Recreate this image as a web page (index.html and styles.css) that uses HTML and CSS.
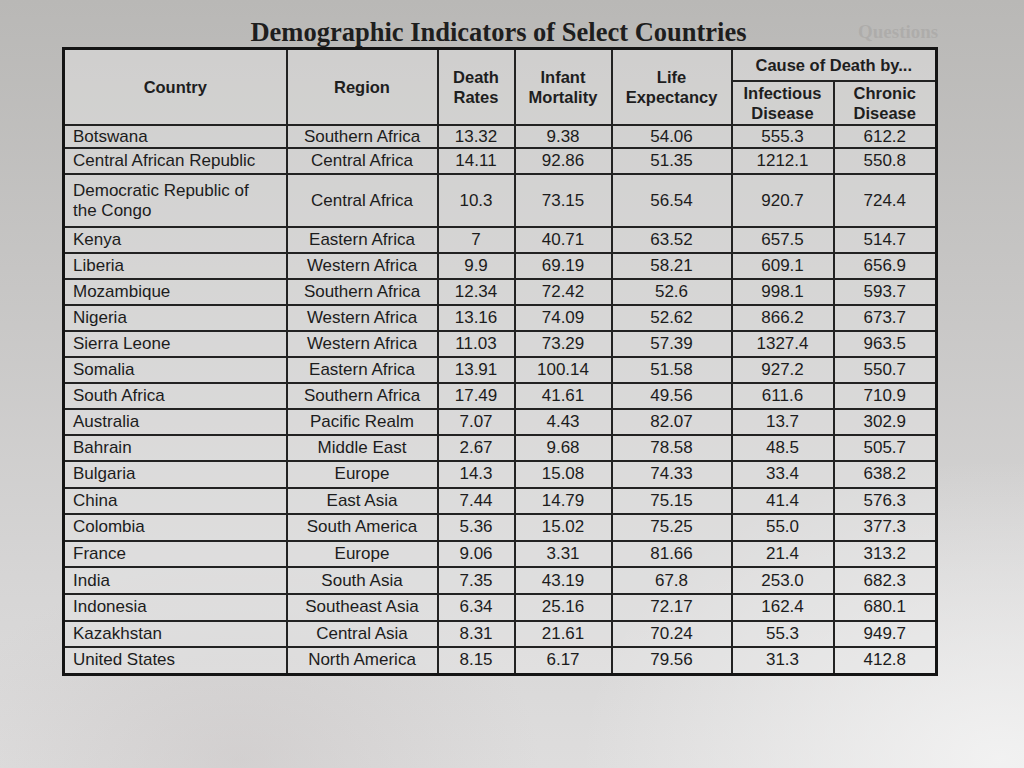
FILE: index.html
```html
<!DOCTYPE html>
<html lang="en">
<head>
<meta charset="utf-8">
<title>Demographic Indicators of Select Countries</title>
<link rel="stylesheet" href="styles.css">
</head>
<body>
<div class="page">
  <div class="ghost">Questions</div>
  <div class="sheet">
    <h1 class="title">Demographic Indicators of Select Countries</h1>
    <table class="data">
      <colgroup>
        <col class="c-country"><col class="c-region"><col class="c-death"><col class="c-infant"><col class="c-life"><col class="c-inf"><col class="c-chr">
      </colgroup>
      <thead>
        <tr class="h1row">
          <th rowspan="2">Country</th>
          <th rowspan="2">Region</th>
          <th rowspan="2">Death<br>Rates</th>
          <th rowspan="2">Infant<br>Mortality</th>
          <th rowspan="2">Life<br>Expectancy</th>
          <th colspan="2" class="cause">Cause of Death by...</th>
        </tr>
        <tr class="h2row">
          <th>Infectious<br>Disease</th>
          <th>Chronic<br>Disease</th>
        </tr>
      </thead>
      <tbody>
        <tr class="r-first"><td>Botswana</td><td>Southern Africa</td><td>13.32</td><td>9.38</td><td>54.06</td><td>555.3</td><td>612.2</td></tr>
        <tr><td>Central African Republic</td><td>Central Africa</td><td>14.11</td><td>92.86</td><td>51.35</td><td>1212.1</td><td>550.8</td></tr>
        <tr class="r-tall"><td>Democratic Republic of<br>the Congo</td><td>Central Africa</td><td>10.3</td><td>73.15</td><td>56.54</td><td>920.7</td><td>724.4</td></tr>
        <tr><td>Kenya</td><td>Eastern Africa</td><td>7</td><td>40.71</td><td>63.52</td><td>657.5</td><td>514.7</td></tr>
        <tr><td>Liberia</td><td>Western Africa</td><td>9.9</td><td>69.19</td><td>58.21</td><td>609.1</td><td>656.9</td></tr>
        <tr><td>Mozambique</td><td>Southern Africa</td><td>12.34</td><td>72.42</td><td>52.6</td><td>998.1</td><td>593.7</td></tr>
        <tr><td>Nigeria</td><td>Western Africa</td><td>13.16</td><td>74.09</td><td>52.62</td><td>866.2</td><td>673.7</td></tr>
        <tr><td>Sierra Leone</td><td>Western Africa</td><td>11.03</td><td>73.29</td><td>57.39</td><td>1327.4</td><td>963.5</td></tr>
        <tr><td>Somalia</td><td>Eastern Africa</td><td>13.91</td><td>100.14</td><td>51.58</td><td>927.2</td><td>550.7</td></tr>
        <tr><td>South Africa</td><td>Southern Africa</td><td>17.49</td><td>41.61</td><td>49.56</td><td>611.6</td><td>710.9</td></tr>
        <tr><td>Australia</td><td>Pacific Realm</td><td>7.07</td><td>4.43</td><td>82.07</td><td>13.7</td><td>302.9</td></tr>
        <tr><td>Bahrain</td><td>Middle East</td><td>2.67</td><td>9.68</td><td>78.58</td><td>48.5</td><td>505.7</td></tr>
        <tr class="r-low"><td>Bulgaria</td><td>Europe</td><td>14.3</td><td>15.08</td><td>74.33</td><td>33.4</td><td>638.2</td></tr>
        <tr class="r-low"><td>China</td><td>East Asia</td><td>7.44</td><td>14.79</td><td>75.15</td><td>41.4</td><td>576.3</td></tr>
        <tr class="r-low"><td>Colombia</td><td>South America</td><td>5.36</td><td>15.02</td><td>75.25</td><td>55.0</td><td>377.3</td></tr>
        <tr class="r-low"><td>France</td><td>Europe</td><td>9.06</td><td>3.31</td><td>81.66</td><td>21.4</td><td>313.2</td></tr>
        <tr class="r-low"><td>India</td><td>South Asia</td><td>7.35</td><td>43.19</td><td>67.8</td><td>253.0</td><td>682.3</td></tr>
        <tr class="r-low"><td>Indonesia</td><td>Southeast Asia</td><td>6.34</td><td>25.16</td><td>72.17</td><td>162.4</td><td>680.1</td></tr>
        <tr class="r-low"><td>Kazakhstan</td><td>Central Asia</td><td>8.31</td><td>21.61</td><td>70.24</td><td>55.3</td><td>949.7</td></tr>
        <tr class="r-low"><td>United States</td><td>North America</td><td>8.15</td><td>6.17</td><td>79.56</td><td>31.3</td><td>412.8</td></tr>
      </tbody>
    </table>
  </div>
</div>
</body>
</html>
```

FILE: styles.css
```css
html, body {
  margin: 0;
  padding: 0;
}

body {
  width: 1024px;
  height: 768px;
  overflow: hidden;
  background:
    radial-gradient(ellipse 420px 300px at 1000px 760px, rgba(245,245,245,0.85), rgba(245,245,245,0) 100%),
    radial-gradient(ellipse 300px 200px at 240px 760px, rgba(190,184,184,0.35), rgba(190,184,184,0) 100%),
    linear-gradient(180deg, #b9b8b6 0%, #c6c5c4 35%, #d6d5d5 75%, #dedddd 100%);
  font-family: "Liberation Sans", Arial, sans-serif;
  color: #1c1c1c;
}

.page {
  position: relative;
  padding: 18px 0 0 62px;
}

.ghost {
  position: absolute;
  top: 21px;
  left: 858px;
  font-family: "Liberation Serif", "Times New Roman", serif;
  font-weight: bold;
  font-size: 19px;
  color: rgba(150,148,146,0.35);
}

.sheet {
  position: relative;
  width: 873px;
}

.title {
  margin: 0;
  font-family: "Liberation Serif", "Times New Roman", serif;
  font-weight: bold;
  font-size: 26.5px;
  line-height: 29px;
  text-align: center;
  color: #1e1e1e;
}

.data {
  width: 873px;
  border-collapse: collapse;
  table-layout: fixed;
  border: 3px solid #141414;
  background: rgba(232,232,232,0.45);
}

.c-country { width: 223px; }
.c-region { width: 151px; }
.c-death { width: 77px; }
.c-infant { width: 97px; }
.c-life { width: 120px; }
.c-inf { width: 102px; }
.c-chr { width: 103px; }

.data th,
.data td {
  border: 2px solid #222;
  padding: 0;
  text-align: center;
  vertical-align: middle;
}

.data th {
  font-weight: bold;
  font-size: 16.5px;
  line-height: 20px;
  color: #1e1e1e;
}

.h1row { height: 32px; }
.h2row { height: 44px; }

.cause {
  height: 30px;
}

.data td {
  font-size: 17px;
  line-height: 20px;
  height: 24px;
}

.data td:first-child {
  text-align: left;
  padding-left: 8px;
}

.r-first td { height: 21px; }
.r-tall td { height: 51px; }
.r-low td { height: 24.6px; }
```
